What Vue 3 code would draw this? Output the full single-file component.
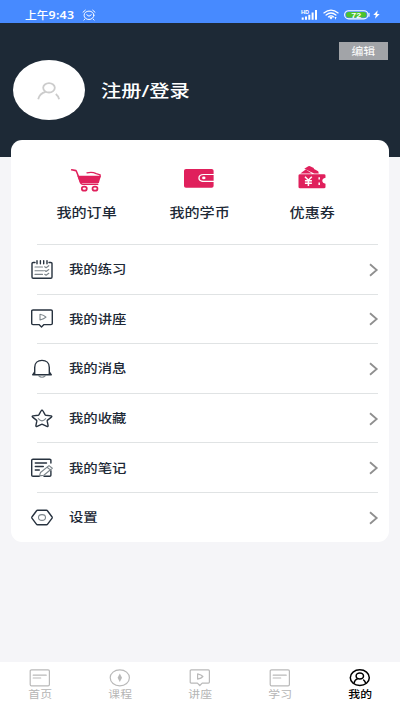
<script setup>
const shortcuts = [
  { label: '我的订单', icon: 'cart' },
  { label: '我的学币', icon: 'wallet' },
  { label: '优惠券', icon: 'coupon' },
]
const menu = [
  { label: '我的练习', icon: 'practice' },
  { label: '我的讲座', icon: 'lecture' },
  { label: '我的消息', icon: 'bell' },
  { label: '我的收藏', icon: 'star' },
  { label: '我的笔记', icon: 'note' },
  { label: '设置', icon: 'settings' },
]
const tabs = [
  { label: '首页', icon: 'page' },
  { label: '课程', icon: 'compass' },
  { label: '讲座', icon: 'talk' },
  { label: '学习', icon: 'page' },
  { label: '我的', icon: 'me', active: true },
]
</script>

<template>
  <div class="screen">
    <div class="status">
      <span class="time">上午<b>9:43</b></span>
      <svg class="alarm" width="14" height="12" viewBox="0 0 14 12">
        <ellipse cx="7" cy="6.3" rx="4.9" ry="4.2" />
        <path d="M1 3.2 3.3 1.2M13 3.2 10.7 1.2M2.9 10l-1 1M11.1 10l1 1M4.8 5.8 7 7.2l2.3-1.4" />
      </svg>
      <div class="signals">
        <svg width="17" height="12" viewBox="0 0 17 12">
          <text x="0" y="4.6" class="hd">HD</text>
          <path class="bars" d="M1.7 8.5v2.3M5 7.5v3.3M8.3 5.8v5M11.6 3.5v7.3M15 1v9.8" />
        </svg>
        <svg class="wifi" width="16" height="11" viewBox="0 0 16 11">
          <path d="M.9 3.9Q8-1.7 15.1 3.9M3.1 6Q8 2 12.9 6M5.4 7.9Q8 5.7 10.6 7.9" />
          <path class="solid" d="M6.2 8.5Q8 7.2 9.8 8.5L8 10.5zM11.5 8h2l-1 2.8z" />
        </svg>
        <svg class="battery" width="26" height="10" viewBox="0 0 26 10">
          <rect x=".6" y=".7" width="23.4" height="8.2" rx="4.1" class="shell" />
          <path d="M4.800 2H19.700a2.800 2.800 0 0 1 0 5.600H4.800a2.800 2.800 0 0 1 0-5.600z" class="charge" />
          <path d="M25 3.400v2.800" class="shell" />
          <text x="7.300" y="7.600" class="level" textLength="9.800" lengthAdjust="spacingAndGlyphs">72</text>
        </svg>
        <svg class="bolt" width="7" height="9" viewBox="0 0 7 9"><path d="M4.7.2.3 5h2.5L2 8.8 6.7 3.9H4.1z" /></svg>
      </div>
    </div>

    <header class="header">
      <div class="avatar">
        <svg width="24" height="20" viewBox="0 0 24 20">
          <ellipse cx="12" cy="6.800" rx="5.800" ry="4.700" />
          <path d="M1.200 18.300Q2.500 12.300 8.700 10.800M18.800 13q2.600 2 3.300 5.300" />
        </svg>
      </div>
      <div class="login"><span>注册/登录</span></div>
      <div class="edit"><span>编辑</span></div>
    </header>

    <main class="card">
      <div class="shortcuts">
        <div v-for="s in shortcuts" :key="s.icon" class="shortcut">
          <svg width="32" height="26" viewBox="0 0 32 26">
            <g v-if="s.icon === 'cart'">
              <path class="line" d="M1.700 2.800l4.300.8c1.400 2 3 8.200 4.700 12.400q.6 1.200 2 1.200h15" />
              <path class="fill" d="M7.400 8.800H31l-2.200 7.300H10.200z" />
              <path class="line thin" d="M17 5.900q5-1.400 9.200.7l4 1.200-.4 2" />
              <ellipse class="line wheel" cx="14.300" cy="21.700" rx="2.500" ry="2" />
              <ellipse class="line wheel" cx="25" cy="21.700" rx="2.500" ry="2" />
            </g>
            <g v-else-if="s.icon === 'wallet'">
              <path class="fill" d="M3 2h25.600q2 0 2 1.700v3.200H20.500c-3 0-5.200 1.600-5.200 4s2.200 4 5.200 4h10.100v4.200q0 1.700-2 1.700H3q-2 0-2-1.700V3.700q0-1.700 2-1.700z" />
              <path class="fill" d="M20.500 8.100h10.100v5.600H20.500c-2.400 0-3.900-1.100-3.900-2.800s1.500-2.800 3.900-2.800z" />
              <ellipse class="white" cx="20.800" cy="10.900" rx="1.700" ry="1.400" />
            </g>
            <g v-else>
              <path class="fill" d="M4.300 6.400 9 3.100q.8-.5 1.600 0l5.200 3.300z" />
              <path class="fill" d="M8.300 1.700 12.300-.8q.9-.5 1.800 0l3.700 1.800q-.3 1.300 1.200 1.500l3.200 1.700.6 2.200h-4.700z" />
              <path class="fill" d="M4 7.300h24q1.500 0 1.500 1.300v2.100c-2 .3-3.200 1.500-3.200 3s1.200 2.700 3.200 3v3.300q0 1.300-1.500 1.300H4q-1.500 0-1.500-1.300V8.600q0-1.300 1.500-1.300z" />
              <path class="yen" d="M9 9.700l3.400 3.600 3.400-3.600M12.400 13.100v6M8.900 13.800h7M8.900 16.300h7M23.200 10.300v2.300M23.200 15.500v2.500" />
            </g>
          </svg>
          <div class="caption"><span>{{ s.label }}</span></div>
        </div>
      </div>

      <ul class="menu">
        <li v-for="m in menu" :key="m.icon" class="row">
          <svg class="glyph" width="24" height="22" viewBox="0 0 24 22">
            <g v-if="m.icon === 'practice'">
              <path d="M5 3.500H3.200q-1.200 0-1.200 1V18q0 1.200 1.200 1.200h17.600q1.200 0 1.200-1.200V4.500q0-1-1.200-1H19" />
              <path d="M7 1.800v3M10.400 1.800v3M13.700 1.800v3M17 1.800v3" />
              <path class="soft" d="M5 8h7.500M5 11.700h8.500M5 15.400h7.500M14.700 7.700l1.400 1 2.700-2M14.700 11.500l1.400 1 2.700-2M14.700 15.300l1.400 1 2.700-2" />
            </g>
            <g v-else-if="m.icon === 'lecture'">
              <path d="M3 2h18q1.300 0 1.300 1.100v12.400q0 1.100-1.300 1.100h-7L11.500 19 9 16.600H3q-1.300 0-1.300-1.100V3.100Q1.700 2 3 2z" />
              <path class="soft" d="M10 6.300q4 .8 6 2.900-2 2-6 2.800z" />
            </g>
            <g v-else-if="m.icon === 'bell'">
              <path d="M4.700 16.400V9.400c0-4.200 3-7 7.300-7s7.300 2.800 7.300 7v7M2.700 16.800h18.600M4.700 14l-2 2.800M19.300 14l2 2.800" />
              <path class="soft" d="M8.500 17.500q3.500 3.600 7 0" />
            </g>
            <g v-else-if="m.icon === 'star'">
              <path d="M12 2.200q.6 0 1 .8l2 3.700q.3.500 1 .6l5 .6q1.400.3.400 1.200l-3.800 3q-.5.500-.4 1.100l.9 4.400q.1 1.200-1.200.7L12.500 16.400q-.5-.2-1 0l-4.400 1.900q-1.300.5-1.200-.7l.9-4.400q.1-.6-.4-1.100l-3.800-3q-1-.9.400-1.200l5-.6q.7-.1 1-.6l2-3.700q.4-.8 1-.8z" />
              <path class="soft" d="M8.300 10.700q3.700 4.300 7.400 0" />
            </g>
            <g v-else-if="m.icon === 'note'">
              <path d="M20.900 6V3.200q0-1-1.200-1H3q-1.300 0-1.300 1v15q0 1 1.300 1h6.300M20.900 13.700v4.500q0 1-1.200 1H14" />
              <path d="M5.300 6h11.200M5.300 9.500h8M5.300 13h4" />
              <path class="soft" d="M10.500 15.500 19 8.600l3.300 2.700-8.500 6.900-4.300.7zM17.100 10.200l3.300 2.700" />
            </g>
            <g v-else>
              <path d="M7.600 3.300h8.800q.8 0 1.200.7l4.500 6q.3.600 0 1.100l-4.500 6q-.4.700-1.200.7H7.600q-.8 0-1.200-.7l-4.500-6q-.3-.6 0-1.100l4.500-6q.4-.7 1.200-.7z" />
              <ellipse class="soft" cx="12" cy="10.500" rx="3.500" ry="2.900" />
            </g>
          </svg>
          <span class="name">{{ m.label }}</span>
          <svg class="arrow" width="9" height="14" viewBox="0 0 9 14"><path d="M1 1.200 7.700 7 1 12.800" /></svg>
        </li>
      </ul>
    </main>

    <nav class="tabs">
      <div v-for="(t, i) in tabs" :key="i" class="tab" :class="{ active: t.active }">
        <svg width="22" height="18" viewBox="0 0 22 18">
          <g v-if="t.icon === 'page'">
            <rect x="1.200" y=".8" width="19.200" height="16" rx="1.300" />
            <path d="M4.200 6.200h13M4.200 9h7.500" />
          </g>
          <g v-else-if="t.icon === 'compass'">
            <ellipse cx="10.800" cy="8.800" rx="9.600" ry="8" />
            <path class="needle" d="M10.800 4.500 13 8.700l-2.200 4.300-2.200-4.300z" />
          </g>
          <g v-else-if="t.icon === 'talk'">
            <path d="M2.200.9h17.200q1 0 1 1v11.200q0 1-1 1h-6.200l-2.400 2.400-2.400-2.400H2.200q-1 0-1-1V1.900q0-1 1-1z" />
            <path d="M8.600 4.900q3.800.9 5.300 2.600-1.500 1.800-5.300 2.700z" />
          </g>
          <g v-else>
            <ellipse cx="10.800" cy="8.700" rx="9.500" ry="7.900" />
            <ellipse cx="10.800" cy="7" rx="3.700" ry="3" />
            <path d="M5 14.200q.5-3.500 3.800-4.600M14.600 11q1.500 1.200 2 3" />
          </g>
        </svg>
        <div class="tab-label"><span>{{ t.label }}</span></div>
      </div>
    </nav>
  </div>
</template>

<style>
body {
  margin: 0;
  background: #f5f5f8;
}
</style>

<style scoped>
.screen {
  display: flex;
  flex-direction: column;
  width: 400px;
  height: 711px;
  overflow: hidden;
  background: #f5f5f8;
  color: #1d2936;
  font-family: "Noto Sans", "Noto Sans CJK SC", sans-serif;
}
svg {
  display: block;
  flex: none;
  overflow: visible;
  fill: none;
  stroke-linecap: round;
  stroke-linejoin: round;
}
span {
  display: inline-block;
  white-space: nowrap;
}
.status {
  display: flex;
  align-items: center;
  box-sizing: border-box;
  height: 23px;
  flex: none;
  padding: 6px 20px 0 25px;
  background: #478aff;
  color: #fff;
}
.time {
  width: 57px;
  font-size: 10px;
  font-weight: 500;
  line-height: 16px;
  transform: scaleX(1.180);
  transform-origin: left;
}
.time b {
  font-size: 10.500px;
  font-weight: 600;
  letter-spacing: .2px;
}
.alarm {
  stroke: #fff;
  stroke-width: 1;
}
.signals {
  display: flex;
  align-items: center;
  margin-left: auto;
}
.hd {
  fill: #fff;
  font: 700 5.500px "Liberation Sans", sans-serif;
}
.bars {
  stroke: #fff;
  stroke-width: 2;
  stroke-linecap: butt;
}
.wifi {
  margin-left: 5px;
  stroke: #fff;
  stroke-width: 1.300;
}
.solid {
  fill: #fff;
  stroke: none;
}
.battery {
  margin-left: 5px;
}
.shell {
  stroke: #fff;
  stroke-width: 1.100;
}
.charge {
  fill: #4cc22e;
}
.level {
  fill: #fff;
  font: 700 7.500px "Liberation Sans", sans-serif;
}
.bolt {
  margin-left: 3px;
  fill: #fff;
}
.header {
  display: flex;
  align-items: flex-start;
  box-sizing: border-box;
  height: 134px;
  flex: none;
  padding: 0 12px 0 13px;
  background: #1d2936;
  color: #fff;
}
.avatar {
  display: flex;
  align-items: center;
  justify-content: center;
  width: 72px;
  height: 60px;
  margin-top: 37px;
  border-radius: 50%;
  background: #fff;
}
.avatar svg {
  margin-top: 2px;
  stroke: #ccc;
  stroke-width: 1.800;
  stroke-linecap: butt;
}
.login {
  margin: 55px 0 0 16px;
  font-size: 17px;
  font-weight: 500;
  line-height: 26px;
}
.login span {
  transform: scaleX(1.190);
  transform-origin: left;
}
.edit {
  width: 49px;
  height: 18px;
  margin: 19px 0 0 auto;
  background: #a2a4a8;
  font-size: 10.300px;
  line-height: 19px;
  text-align: center;
}
.edit span {
  transform: scaleX(1.150);
}
.card {
  position: relative;
  box-sizing: border-box;
  width: 378px;
  height: 402px;
  margin: -17px 0 0 11px;
  padding: 0 11px 0 26px;
  border-radius: 11px;
  background: #fff;
}
.shortcuts {
  display: flex;
  height: 104px;
  margin: 0 9px 0 -7px;
}
.shortcut {
  display: flex;
  flex: 1;
  flex-direction: column;
  align-items: center;
  padding-top: 27px;
}
.shortcut svg {
  margin-left: -1px;
}
.fill {
  fill: #e0205c;
}
.white {
  fill: #fff;
}
.line {
  stroke: #e0205c;
  stroke-width: 1.600;
}
.thin {
  stroke-width: 1.300;
}
.wheel {
  stroke-width: 1.700;
}
.yen {
  stroke: #fff;
  stroke-width: 1.500;
  stroke-linecap: butt;
}
.caption {
  margin-top: 9px;
  font-size: 12.800px;
  font-weight: 500;
  line-height: 20px;
}
.caption span {
  transform: scaleX(1.180);
}
.menu {
  margin: 0;
  padding: 0;
  list-style: none;
}
.row {
  display: flex;
  align-items: center;
  box-sizing: border-box;
  height: 49.600px;
  padding-top: 1px;
  border-top: 1px solid #e0e3e4;
}
.glyph {
  margin-left: -7px;
  stroke: #27323f;
  stroke-width: 1.400;
}
.soft {
  stroke: #7c858b;
  stroke-width: 1.100;
}
.name {
  margin: 1px 0 0 14.500px;
  font-size: 12.400px;
  font-weight: 500;
  line-height: 20px;
  transform: scaleX(1.160);
  transform-origin: left;
}
.arrow {
  margin-left: auto;
  stroke: #8f8f8f;
  stroke-width: 1.800;
  stroke-linecap: butt;
  stroke-linejoin: miter;
}
.tabs {
  display: flex;
  height: 49px;
  flex: none;
  margin-top: auto;
  background: #fff;
}
.tab {
  display: flex;
  flex: 1;
  flex-direction: column;
  align-items: center;
  padding-top: 7px;
  color: #b5b5b5;
}
.tab svg {
  stroke: #b9b9b9;
  stroke-width: 1.200;
}
.tab .needle {
  fill: #b9b9b9;
  stroke: none;
}
.tab-label {
  margin-top: -1px;
  font-size: 10.200px;
  line-height: 16px;
}
.tab-label span {
  transform: scaleX(1.160);
}
.active {
  color: #000;
}
.active svg {
  stroke: #000;
  stroke-width: 1.500;
}
.active .tab-label {
  font-weight: 500;
}
</style>
